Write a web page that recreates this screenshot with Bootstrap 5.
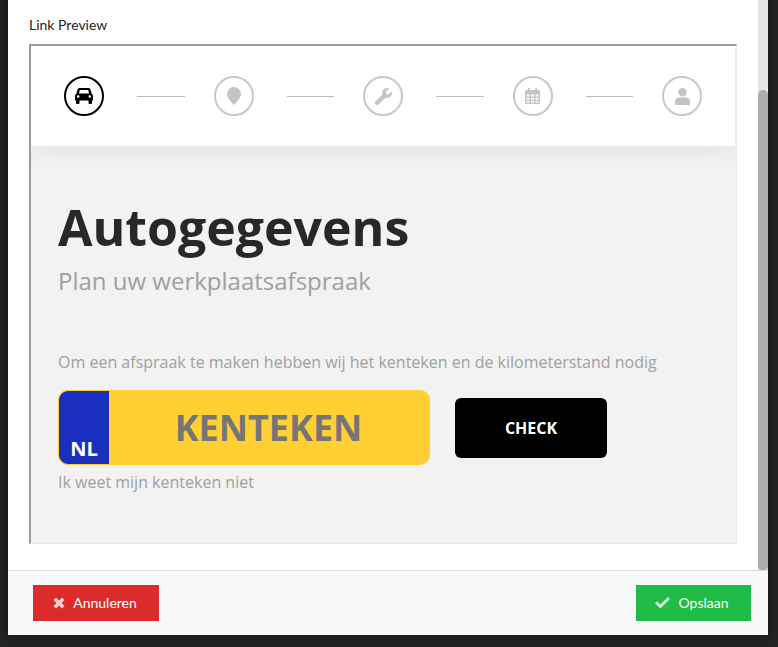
<!DOCTYPE html>
<html lang="nl">
<head>
<meta charset="utf-8">
<title>Link Preview</title>
<link href="https://cdn.jsdelivr.net/npm/bootstrap@5.3.0/dist/css/bootstrap.min.css" rel="stylesheet">
<style>
html,body{height:647px;overflow:hidden}
body{background:#232323;font-family:"Open Sans",sans-serif;padding:0 10px 12px 8px}
.dlg{height:635px;background:#fff;box-shadow:0 0 8px rgba(0,0,0,.5)}
.dlg-main{height:570px;min-height:0}
.dlg-content{width:750px;padding:16px 21px 0 21px}
.lbl{font:14px/18px Lato,sans-serif;color:#212529;margin-bottom:10px}
.track{width:10px;background:#e4e4e4;padding-top:90px}
.thumb{height:480px;background:#adadad;border-radius:5px 5px 4px 4px}
.frame{height:500px;border-style:solid;border-width:2px 1px 1px 2px;border-color:#9a9a9a #e9e9e9 #e9e9e9 #9a9a9a;background:#f2f2f2;overflow:hidden}
.steps{height:100px;background:#fff;padding:0 33px;margin-right:1px;box-shadow:0 4px 24px rgba(0,0,0,.07)}
.stp{width:40px;height:40px;border:2px solid #c8c8c8;border-radius:50%;color:#c4c4c4;flex:none}
.stp.on{border-color:#000;color:#000}
.stp svg{display:block}
.ln{height:1px;background:#bdbdbd;flex:1;margin:0 29px 0 33px}
.pane{padding:48px 27px 0 27px}
.ttl{font-size:50px;line-height:66px;font-weight:700;color:#282828;margin:0}
.sub{font-size:24px;line-height:33px;color:#a0a0a0;margin:4px 0 0}
.intro{font-size:16px;line-height:22px;color:#a0a0a0;margin:54px 0 17px}
.plate{width:372px;height:75px;background:#ffcf33;border-radius:10px;overflow:hidden}
.eu{width:51px;background:#1a2fbd;border:1px solid #ffcf33;border-right:0;border-radius:10px 0 0 10px;color:#fff;font-size:20px;font-weight:700;line-height:27px;padding-bottom:2px}
.plt{font-size:36px;font-weight:700;color:#757575;line-height:1;padding-right:2px}
.chk{width:152px;height:60px;background:#000;color:#fff;border-radius:6px;font-size:16px;font-weight:700;border:0;margin-left:25px}
.chk:hover{background:#000;color:#fff}
.nok{font-size:16px;line-height:22px;color:#a0a0a0;margin-top:6px}
.foot{height:65px;background:#f8f9fa;border-top:1px solid #dadce0;padding:0 17px 0 25px}
.act{height:36px;border-radius:0;border:0;font:14px/20px Lato,sans-serif;color:#fff;padding:0 2px 0 0}
.act svg{flex:none}
.act-no{width:126px;background:#dc2b2b}
.act-no:hover{background:#dc2b2b;color:#fff}
.act-ok{width:115px;background:#21bb47;gap:8px;padding-right:3px}
.act-ok:hover{background:#21bb47;color:#fff}
</style>
</head>
<body>
<div class="dlg d-flex flex-column">
  <div class="dlg-main d-flex">
    <div class="dlg-content">
      <div class="lbl">Link Preview</div>
      <div class="frame">
        <div class="steps d-flex align-items-center position-relative">
          <div class="stp on d-flex align-items-center justify-content-center">
            <svg width="18" height="16" viewBox="0 0 18 16" fill="currentColor"><path d="M4.6 0h8.8c1 0 1.800.6 2.100 1.500L16.700 6c.8.4 1.300 1.200 1.300 2v4.500h-1V15a1 1 0 0 1-1 1h-1.500a1 1 0 0 1-1-1v-2.500H4.500V15a1 1 0 0 1-1 1H2a1 1 0 0 1-1-1v-2.500H0V8c0-.8.500-1.600 1.300-2l1.200-4.500C2.800.6 3.600 0 4.600 0zM4.800 2 4 5.500h10L13.200 2zM3.200 7.200a1.300 1.300 0 1 0 0 2.600 1.300 1.300 0 0 0 0-2.600zm11.600 0a1.300 1.300 0 1 0 0 2.600 1.300 1.300 0 0 0 0-2.600z" fill-rule="evenodd"/></svg>
          </div>
          <div class="ln"></div>
          <div class="stp d-flex align-items-center justify-content-center">
            <svg width="14" height="18" viewBox="0 0 14 18" fill="currentColor"><path d="M7 0a7 7 0 0 1 7 7c0 3.800-4.500 8.700-7 11-2.500-2.300-7-7.200-7-11a7 7 0 0 1 7-7z"/></svg>
          </div>
          <div class="ln"></div>
          <div class="stp d-flex align-items-center justify-content-center">
            <svg width="17" height="17" viewBox="0 0 17 17" fill="currentColor"><path d="M12.300 0c.7 0 1.300.1 1.900.4L10.800 3.600l.4 2.500 2.500.5L16.700 3.300c.2.500.3 1.100.3 1.700 0 2.800-2.300 5-5 5-.6 0-1.100-.1-1.600-.3L4 16.200c-1 1.100-2.500 1-3.400.1s-.9-2.400.1-3.300L7.300 6.700C7.100 6.100 7 5.600 7 5c0-2.800 2.500-5 5.300-5z"/></svg>
          </div>
          <div class="ln"></div>
          <div class="stp d-flex align-items-center justify-content-center">
            <svg width="15" height="16" viewBox="0 0 15 16" fill="currentColor"><path fill-rule="evenodd" d="M3 0h1.800v2h5.400V0H12v2h1.500c.8 0 1.500.7 1.500 1.500v11c0 .8-.7 1.500-1.500 1.500h-12C.7 16 0 15.300 0 14.500v-11C0 2.700.7 2 1.500 2H3zM1.500 6.500v2h3v-2zm4.500 0v2h3v-2zm4.500 0v2h3v-2zm-9 3.300v2h3v-2zm4.500 0v2h3v-2zm4.500 0v2h3v-2zm-9 3.200v1.500h3V13zm4.500 0v1.500h3V13zm4.500 0v1.500h3V13z"/></svg>
          </div>
          <div class="ln"></div>
          <div class="stp d-flex align-items-center justify-content-center">
            <svg width="15" height="17" viewBox="0 0 15 17" fill="currentColor"><circle cx="7.500" cy="4.200" r="4.200"/><path d="M4 9.500h7c2.200 0 4 1.800 4 4V17H0v-3.500c0-2.200 1.800-4 4-4z"/></svg>
          </div>
        </div>
        <div class="pane">
          <h1 class="ttl">Autogegevens</h1>
          <p class="sub">Plan uw werkplaatsafspraak</p>
          <p class="intro">Om een afspraak te maken hebben wij het kenteken en de kilometerstand nodig</p>
          <div class="d-flex align-items-center">
            <div class="plate d-flex">
              <div class="eu d-flex align-items-end justify-content-center">NL</div>
              <div class="plt flex-fill d-flex align-items-center justify-content-center">KENTEKEN</div>
            </div>
            <button class="btn chk" type="button">CHECK</button>
          </div>
          <div class="nok">Ik weet mijn kenteken niet</div>
        </div>
      </div>
    </div>
    <div class="track"><div class="thumb"></div></div>
  </div>
  <div class="foot d-flex align-items-center justify-content-between">
    <button class="btn act act-no d-flex align-items-center justify-content-center gap-2" type="button">
      <svg width="12" height="12" viewBox="0 0 12 12" fill="#f8d0d0"><path d="M3 .5 6 3.500 9 .5 11.500 3 8.500 6l3 3L9 11.500l-3-3-3 3L.5 9l3-3-3-3z"/></svg>
      <span>Annuleren</span>
    </button>
    <button class="btn act act-ok d-flex align-items-center justify-content-center" type="button">
      <svg width="15" height="12" viewBox="0 0 15 12" fill="#d5f3dc"><path d="M5.300 11.500 0 6.200 2 4.200 5.300 7.500 13 0l2 2z"/></svg>
      <span>Opslaan</span>
    </button>
  </div>
</div>
<script src="https://cdn.jsdelivr.net/npm/bootstrap@5.3.0/dist/js/bootstrap.bundle.min.js"></script>
</body>
</html>
